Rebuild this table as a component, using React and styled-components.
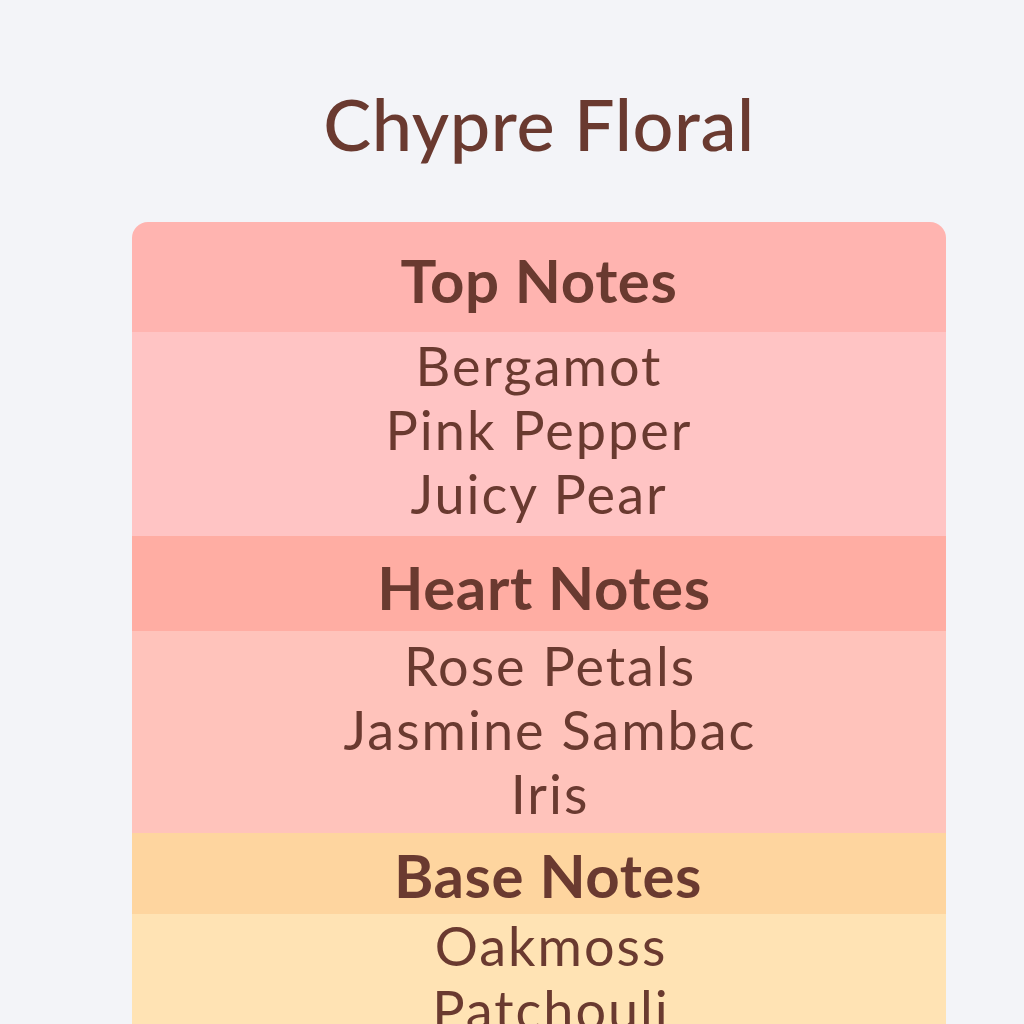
import React from "react";
import styled, { createGlobalStyle } from "styled-components";

const Global = createGlobalStyle`
  html, body { margin: 0; padding: 0; background: #f3f4f8; }
  body { font-family: Lato, "Noto Sans", sans-serif; color: #6a3a30; }
`;

const Page = styled.div`
  width: 1024px;
  height: 1024px;
  overflow: hidden;
  padding-left: 132px;
  box-sizing: border-box;
`;

const Column = styled.div`
  width: 814px;
  display: flex;
  flex-direction: column;
`;

const Title = styled.h1`
  margin: 0;
  height: 222px;
  padding-top: 81px;
  box-sizing: border-box;
  text-align: center;
  font-size: 72px;
  font-weight: 500;
  line-height: 84px;
  letter-spacing: 0.6px;
`;

const Card = styled.div`
  border-radius: 16px 16px 0 0;
  overflow: hidden;
  display: flex;
  flex-direction: column;
`;

const Header = styled.div`
  height: ${(p) => p.$h}px;
  background: ${(p) => p.$bg};
  display: flex;
  align-items: center;
  justify-content: center;
  padding-top: ${(p) => p.$shift || 0}px;
  padding-left: ${(p) => p.$indent || 0}px;
  box-sizing: border-box;
  font-size: 60px;
  font-weight: 700;
  line-height: 1;
  letter-spacing: 0.6px;
`;

const Body = styled.div`
  height: ${(p) => p.$h}px;
  background: ${(p) => p.$bg};
  padding-top: ${(p) => p.$pt}px;
  padding-left: ${(p) => p.$indent || 0}px;
  box-sizing: border-box;
  display: flex;
  flex-direction: column;
  align-items: center;
  font-size: 54px;
  font-weight: 400;
  line-height: 64px;
  letter-spacing: 2px;
`;

const Item = styled.div``;

const sections = [
  {
    title: "Top Notes",
    hh: 110,
    hbg: "#ffb4b0",
    shift: 5,
    hi: 0,
    bh: 204,
    bbg: "#ffc4c4",
    pt: 2,
    bi: 0,
    items: ["Bergamot", "Pink Pepper", "Juicy Pear"],
  },
  {
    title: "Heart Notes",
    hh: 95,
    hbg: "#ffada3",
    shift: 6,
    hi: 10,
    bh: 202,
    bbg: "#ffc3bb",
    pt: 3,
    bi: 22,
    items: ["Rose Petals", "Jasmine Sambac", "Iris"],
  },
  {
    title: "Base Notes",
    hh: 81,
    hbg: "#fed59f",
    shift: 2,
    hi: 18,
    bh: 200,
    bbg: "#ffe3b4",
    pt: 0,
    bi: 24,
    items: ["Oakmoss", "Patchouli"],
  },
];

export default function App() {
  return (
    <>
      <Global />
      <Page>
        <Column>
          <Title>Chypre Floral</Title>
          <Card>
            {sections.map((s) => (
              <React.Fragment key={s.title}>
                <Header $h={s.hh} $bg={s.hbg} $shift={s.shift} $indent={s.hi}>
                  {s.title}
                </Header>
                <Body $h={s.bh} $bg={s.bbg} $pt={s.pt} $indent={s.bi}>
                  {s.items.map((it) => (
                    <Item key={it}>{it}</Item>
                  ))}
                </Body>
              </React.Fragment>
            ))}
          </Card>
        </Column>
      </Page>
    </>
  );
}
